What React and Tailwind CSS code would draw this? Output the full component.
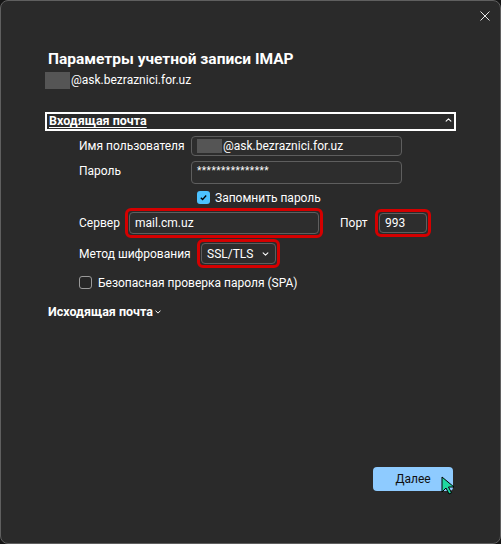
import React from "react";

const Chevron = ({ up = false, className = "" }) => (
  <svg viewBox="0 0 8 5" className={className} fill="none" stroke="currentColor" strokeWidth="1.3" strokeLinecap="round" strokeLinejoin="round">
    {up ? <path d="M1 4 4 1l3 3" /> : <path d="M1 1l3 3 3-3" />}
  </svg>
);

const RedRing = ({ className = "", children }) => (
  <div className={`shrink-0 rounded-[6px] border-[3px] border-[#d40000] p-[1px] ${className}`}>{children}</div>
);

const Field = ({ className = "", children }) => (
  <div className={`flex shrink-0 items-center whitespace-nowrap rounded-[4px] border border-[#5e5e5e] bg-[#2d2d2d] px-[5px] text-[12px] leading-none text-white ${className}`}>
    {children}
  </div>
);

const App = () => {
  return (
    <div className="h-[544px] w-[501px] bg-[#151515] font-['Roboto',sans-serif] text-white">
      <div className="relative flex h-full flex-col rounded-[8px] border border-[#5f5f5f] bg-[#2a2a2a] pl-[44px]">
        {/* title bar */}
        <div className="flex h-[29px] items-center justify-end pr-[10px]">
          <svg viewBox="0 0 10 10" className="h-[10px] w-[10px] text-[#e6e6e6]" stroke="currentColor" strokeWidth="1">
            <path d="M0.5 0.5l9 9M9.5 0.5l-9 9" />
          </svg>
        </div>

        <h1 className="ml-[3px] mt-[18px] whitespace-nowrap text-[15.5px] font-bold leading-[22px]">
          Параметры учетной записи IMAP
        </h1>
        <div className="mt-[1px] flex h-[18px] items-center whitespace-nowrap text-[12px] leading-none">
          <span className="mr-[1px] h-[17px] w-[25px] bg-[#555]" />
          <span>@ask.bezraznici.for.uz</span>
        </div>

        {/* incoming */}
        <div className="mt-[23px] flex h-[19px] w-[411px] items-center justify-between border-2 border-white pl-[2px] pr-[2px]">
          <span className="whitespace-nowrap text-[12.5px] font-bold leading-none underline decoration-1 underline-offset-[2px]">Входящая почта</span>
          <Chevron up className="mb-[3px] h-[4px] w-[7px] text-white" />
        </div>

        <div className="ml-[34px] flex flex-col whitespace-nowrap text-[12px] leading-none">
          <div className="mt-[5px] flex items-center">
            <span className="w-[112px] shrink-0">Имя пользователя</span>
            <Field className="h-[20px] w-[211px]">
              <span className="mr-[1px] h-[14px] w-[25px] bg-[#555]" />
              <span>@ask.bezraznici.for.uz</span>
            </Field>
          </div>
          <div className="mt-[5px] flex items-start">
            <span className="w-[112px] shrink-0 pt-[4px]">Пароль</span>
            <Field className="h-[23px] w-[211px] items-start pt-[4px]">
              <span className="text-[10px] tracking-[0.5px]">***************</span>
            </Field>
          </div>
          <div className="ml-[118px] mt-[7px] flex items-center">
            <span className="flex h-[13px] w-[13px] shrink-0 items-center justify-center rounded-[3px] bg-[#4cc2ff]">
              <svg viewBox="0 0 10 10" className="h-[9px] w-[9px]" fill="none" stroke="#000" strokeWidth="1.4">
                <path d="M2 5.2 4 7.2 8 2.8" />
              </svg>
            </span>
            <span className="ml-[5px]">Запомнить пароль</span>
          </div>

          <div className="mt-[4px] flex items-center">
            <span className="w-[46px] shrink-0">Сервер</span>
            <RedRing className="h-[30px] w-[198px]">
              <Field className="h-full w-full">mail.cm.uz</Field>
            </RedRing>
            <span className="ml-[17px] w-[35px] shrink-0">Порт</span>
            <RedRing className="h-[28px] w-[56px]">
              <Field className="h-full w-full">993</Field>
            </RedRing>
          </div>

          <div className="mt-[1px] flex items-center">
            <span className="w-[118px] shrink-0">Метод шифрования</span>
            <RedRing className="h-[29px] w-[83px]">
              <Field className="h-full w-full justify-between pr-[6px]">
                <span>SSL/TLS</span>
                <Chevron className="h-[4px] w-[7px] text-white" />
              </Field>
            </RedRing>
          </div>

          <div className="mt-[8px] flex items-center">
            <span className="h-[13px] w-[13px] shrink-0 rounded-[3px] border border-[#9a9a9a] bg-[#262626]" />
            <span className="ml-[6px]">Безопасная проверка пароля (SPA)</span>
          </div>
        </div>

        {/* outgoing */}
        <div className="ml-[3px] mt-[15px] flex h-[16px] items-center whitespace-nowrap">
          <span className="text-[12.5px] font-bold">Исходящая почта</span>
          <Chevron className="ml-[2px] h-[4px] w-[6px] text-white" />
        </div>

        <div className="flex-1" />

        <div className="mb-[52px] flex justify-end pr-[47px]">
          <button className="h-[24px] w-[80px] rounded-[4px] bg-[#8ecbff] text-[12px] text-[#101010]">Далее</button>
        </div>

        {/* mouse pointer */}
        <svg viewBox="0 0 14 20" className="absolute left-[440px] top-[475px] h-[20px] w-[14px]">
          <path d="M1 1v15l4-4 3 6 2.5-1.2-3-5.8h5.5z" fill="#1fd7a0" stroke="#000" strokeWidth="1" strokeLinejoin="round" />
        </svg>
      </div>
    </div>
  );
};

export default App;
